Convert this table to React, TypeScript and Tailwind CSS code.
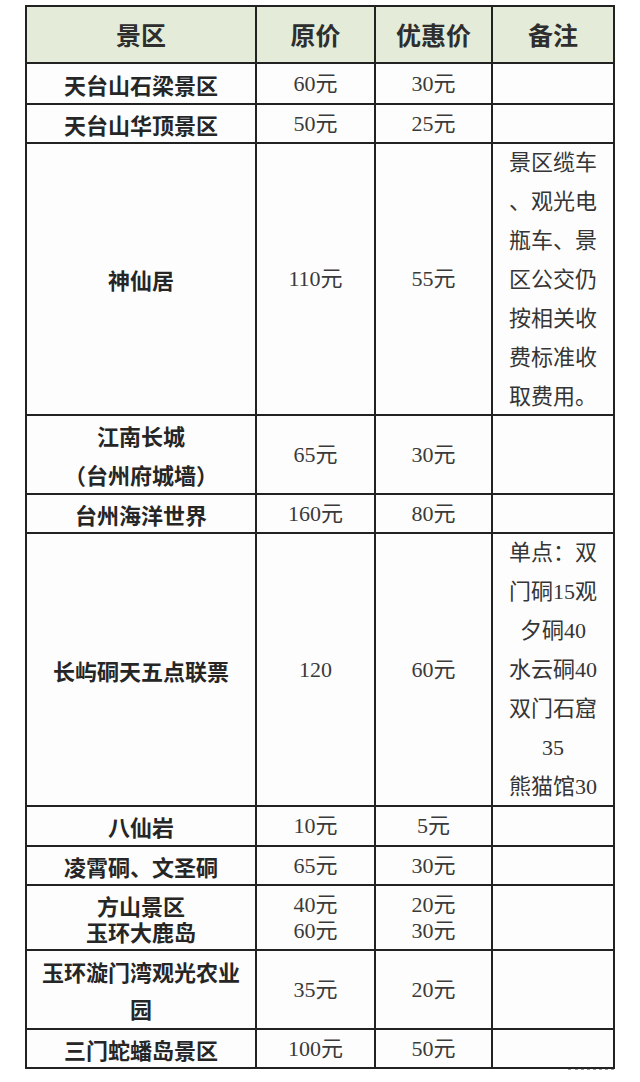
const sans = "font-['Noto_Sans_CJK_SC',sans-serif]";
const serif = "font-['Liberation_Serif','Noto_Sans_CJK_SC',serif]";

type Row = {
  h: string;
  name: string[];
  nameLeading?: string;
  price: string[];
  sale: string[];
  priceLeading?: string;
  note?: string[];
};

const rows: Row[] = [
  { h: "h-[41px]", name: ["天台山石梁景区"], price: ["60元"], sale: ["30元"] },
  { h: "h-[39px]", name: ["天台山华顶景区"], price: ["50元"], sale: ["25元"] },
  {
    h: "h-[272px]",
    name: ["神仙居"],
    price: ["110元"],
    sale: ["55元"],
    note: ["景区缆车", "、观光电", "瓶车、景", "区公交仍", "按相关收", "费标准收", "取费用。"],
  },
  {
    h: "h-[79px]",
    name: ["江南长城", "（台州府城墙）"],
    nameLeading: "leading-[39px]",
    price: ["65元"],
    sale: ["30元"],
  },
  { h: "h-[39px]", name: ["台州海洋世界"], price: ["160元"], sale: ["80元"] },
  {
    h: "h-[273px]",
    name: ["长屿硐天五点联票"],
    price: ["120"],
    sale: ["60元"],
    note: ["单点：双", "门硐15观", "夕硐40", "水云硐40", "双门石窟", "35", "熊猫馆30"],
  },
  { h: "h-[40px]", name: ["八仙岩"], price: ["10元"], sale: ["5元"] },
  { h: "h-[39px]", name: ["凌霄硐、文圣硐"], price: ["65元"], sale: ["30元"] },
  {
    h: "h-[65px]",
    name: ["方山景区", "玉环大鹿岛"],
    nameLeading: "leading-[26px]",
    price: ["40元", "60元"],
    sale: ["20元", "30元"],
    priceLeading: "leading-[26px]",
  },
  {
    h: "h-[79px]",
    name: ["玉环漩门湾观光农业", "园"],
    nameLeading: "leading-[37px]",
    price: ["35元"],
    sale: ["20元"],
  },
  { h: "h-[39px]", name: ["三门蛇蟠岛景区"], price: ["100元"], sale: ["50元"] },
];

const cell = "flex flex-col items-center justify-center text-center border-r-2 border-b-2 border-[#222]";

function Lines({ items, className }: { items: string[]; className: string }) {
  return (
    <div className={className}>
      {items.map((t, i) => (
        <div key={i} className="whitespace-nowrap">
          {t}
        </div>
      ))}
    </div>
  );
}

export default function App() {
  return (
    <div className="min-h-[1082px] w-[640px] bg-white pt-[5px]">
      <div className="ml-[25px] w-[590px] border-t-2 border-l-2 border-[#222]">
        {/* header */}
        <div className={`flex h-[57px] bg-[#e4ecd9] ${sans} text-[25px] font-bold text-[#2e2e2e]`}>
          <div className={`${cell} w-[230px]`}>景区</div>
          <div className={`${cell} w-[119px]`}>原价</div>
          <div className={`${cell} w-[117px]`}>优惠价</div>
          <div className={`${cell} w-[122px]`}>备注</div>
        </div>

        {rows.map((r, i) => (
          <div key={i} className={`flex ${r.h} bg-[#fdfdfd]`}>
            <div className={`${cell} w-[230px]`}>
              <Lines
                items={r.name}
                className={`${sans} text-[22px] font-bold text-[#262626] ${r.nameLeading ?? "leading-[30px]"}`}
              />
            </div>
            <div className={`${cell} w-[119px]`}>
              <Lines
                items={r.price}
                className={`${serif} text-[22px] text-[#3a3a3a] ${r.priceLeading ?? "leading-[30px]"}`}
              />
            </div>
            <div className={`${cell} w-[117px]`}>
              <Lines
                items={r.sale}
                className={`${serif} text-[22px] text-[#3a3a3a] ${r.priceLeading ?? "leading-[30px]"}`}
              />
            </div>
            <div className={`${cell} w-[122px]`}>
              {r.note && (
                <Lines items={r.note} className={`${serif} text-[22px] leading-[39px] text-[#353535]`} />
              )}
            </div>
          </div>
        ))}
      </div>
      <div className="ml-[568px] -mt-[2px] w-[46px] border-t-[3px] border-dotted border-[#9a9a9a]" />
    </div>
  );
}
